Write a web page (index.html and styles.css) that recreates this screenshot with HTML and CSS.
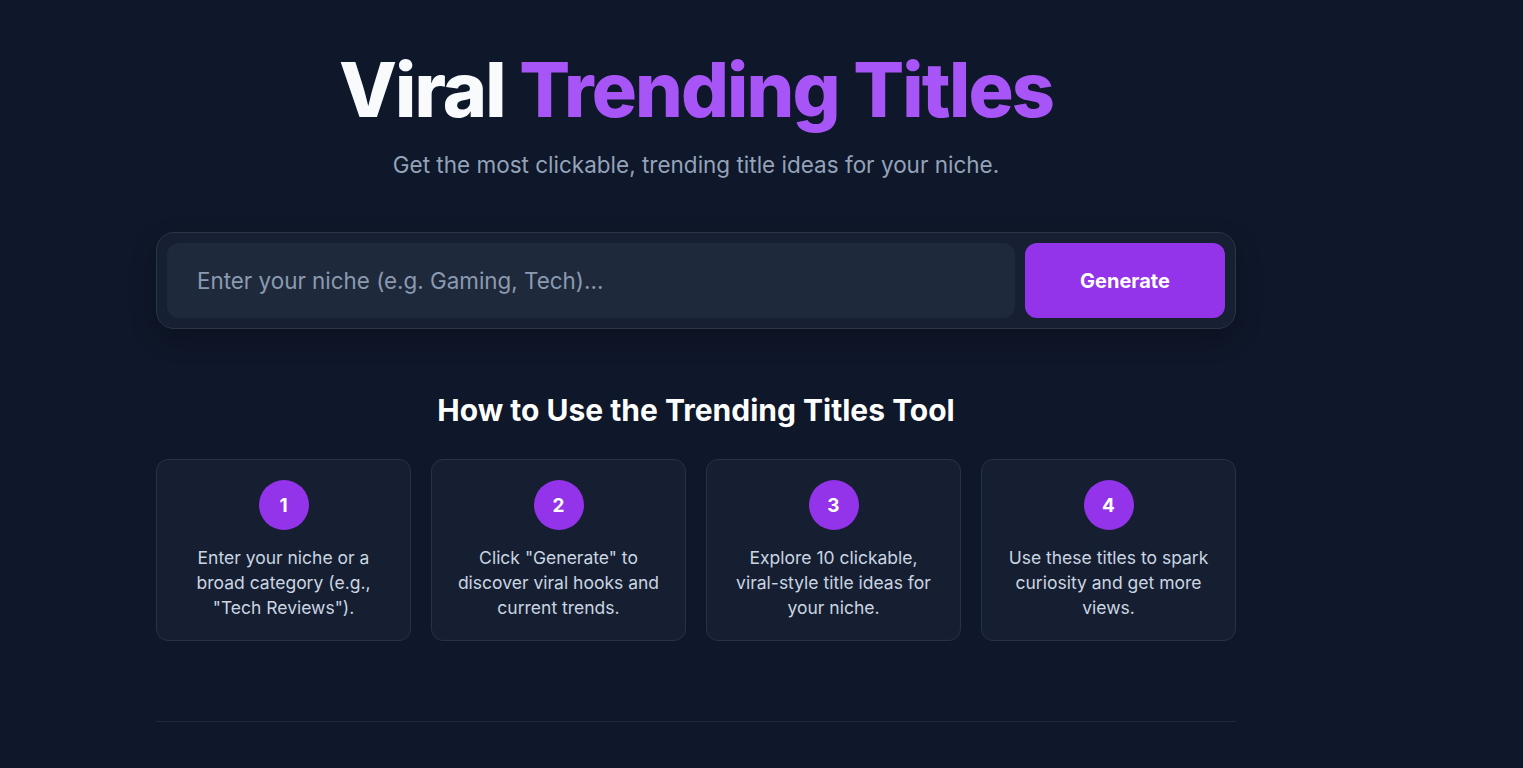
FILE: index.html
```html
<!DOCTYPE html>
<html lang="en">
<head>
<meta charset="utf-8">
<title>Viral Trending Titles</title>
<link rel="stylesheet" href="styles.css">
</head>
<body>
<main class="page">
  <header class="hero">
    <h1 class="title">Viral <span class="accent">Trending Titles</span></h1>
    <p class="subtitle">Get the most clickable, trending title ideas for your niche.</p>
  </header>
  <form class="search" onsubmit="return false">
    <input class="search-input" type="text" placeholder="Enter your niche (e.g. Gaming, Tech)...">
    <button class="search-btn" type="submit">Generate</button>
  </form>
  <section class="howto">
    <h2 class="howto-title">How to Use the Trending Titles Tool</h2>
    <div class="steps">
      <div class="step"><div class="step-num">1</div><p class="step-text">Enter your niche or a broad category (e.g., "Tech Reviews").</p></div>
      <div class="step"><div class="step-num">2</div><p class="step-text">Click "Generate" to discover viral hooks and current trends.</p></div>
      <div class="step"><div class="step-num">3</div><p class="step-text">Explore 10 clickable, viral-style title ideas for your niche.</p></div>
      <div class="step"><div class="step-num">4</div><p class="step-text">Use these titles to spark curiosity and get more views.</p></div>
    </div>
  </section>
  <hr class="divider">
</main>
</body>
</html>
```
FILE: styles.css
```css
* { box-sizing: border-box; }
html, body { margin: 0; padding: 0; }
body {
  background: #0f172a;
  font-family: Inter, "Noto Sans", sans-serif;
  color: #f8fafc;
  min-height: 768px;
}
.page {
  width: 1080px;
  margin-left: 156px;
  padding-top: 48px;
}
.hero { text-align: center; }
.title {
  margin: 0;
  font-size: 75.3px;
  font-weight: 800;
  line-height: 83px;
  letter-spacing: -0.025em;
  color: #f8fafc;
}
.accent { color: #a855f7; }
.subtitle {
  margin: 19px 0 0;
  font-size: 22.5px;
  line-height: 30px;
  color: #94a3b8;
}
.search {
  margin-top: 52px;
  display: flex;
  gap: 10px;
  padding: 10px;
  background: #172033;
  border: 1px solid #2a3547;
  border-radius: 18px;
  box-shadow: 0 10px 25px rgba(0,0,0,0.25);
}
.search-input {
  flex: 1;
  height: 75px;
  border: none;
  outline: none;
  background: #1e293b;
  border-radius: 12px;
  padding: 0 30px;
  font-family: inherit;
  font-size: 22.4px;
  color: #e2e8f0;
}
.search-input::placeholder { color: #8b9ab0; }
.search-btn {
  width: 200px;
  height: 75px;
  border: none;
  border-radius: 12px;
  background: #9333ea;
  color: #fff;
  font-family: inherit;
  font-size: 20px;
  font-weight: 700;
}
.howto { margin-top: 63px; }
.howto-title {
  margin: 0;
  text-align: center;
  font-size: 30px;
  font-weight: 700;
  line-height: 36px;
  color: #fff;
}
.steps {
  margin-top: 31px;
  display: grid;
  grid-template-columns: repeat(4, 1fr);
  gap: 20px;
}
.step {
  background: #151f31;
  border: 1px solid #273244;
  border-radius: 12px;
  padding: 20px 24px 20px;
  display: flex;
  flex-direction: column;
  align-items: center;
  text-align: center;
  height: 182px;
}
.step-num {
  width: 50px;
  height: 50px;
  border-radius: 50%;
  background: #9333ea;
  color: #fff;
  font-weight: 700;
  font-size: 19px;
  display: flex;
  align-items: center;
  justify-content: center;
  flex-shrink: 0;
}
.step-text {
  margin: 15px 0 0;
  font-size: 17.5px;
  line-height: 25px;
  color: #cbd5e1;
}
.divider {
  margin: 80px 0 0;
  border: none;
  border-top: 1px solid #1e293b;
}
```
